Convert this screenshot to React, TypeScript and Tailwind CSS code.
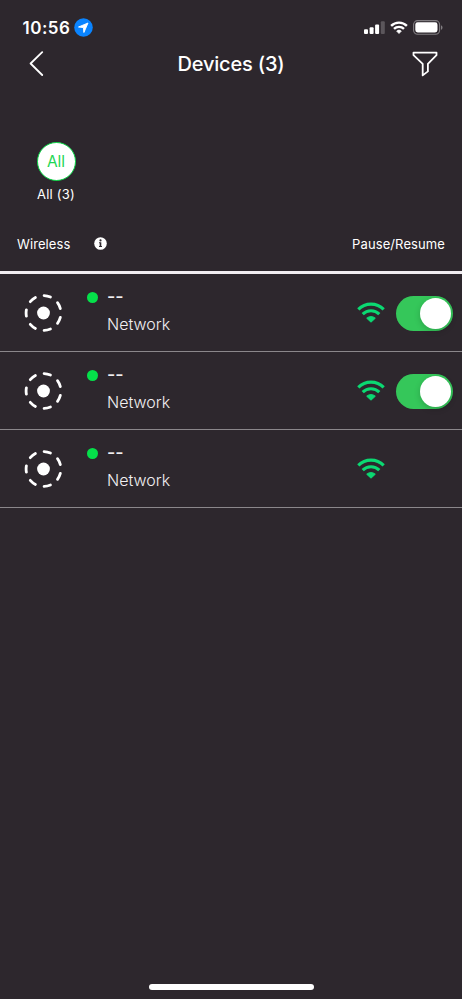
import { useState } from "react";
import clsx from "clsx";

const initialDevices = [
  { id: 1, name: "--", connection: "Network", canPause: true, online: true },
  { id: 2, name: "--", connection: "Network", canPause: true, online: true },
  { id: 3, name: "--", connection: "Network", canPause: false, online: true },
];

function StatusBar() {
  return (
    <div className="flex h-[46px] items-center justify-between pl-[22.5px] pr-[19px] pt-[9px]">
      <div className="flex items-center gap-[4px]">
        <span className="pt-px text-[17px] font-semibold leading-none tracking-[0.5px]">10:56</span>
        <svg className="h-[19px] w-[19px]" viewBox="0 0 19 19">
          <circle cx="9.5" cy="9.5" r="9.3" fill="#0a84ff" />
          <path d="M14 5 4.5 9l4.9.6.5 4.9Z" fill="#fff" stroke="#fff" strokeWidth="0.9" strokeLinejoin="round" />
        </svg>
      </div>
      <div className="flex items-center">
        <svg className="h-[13px] w-[21px]" viewBox="0 0 21 13" fill="#fff">
          <rect x="0" y="8.3" width="4" height="4.7" rx="1" />
          <rect x="5.6" y="6.3" width="4" height="6.7" rx="1" />
          <rect x="11.1" y="3.4" width="4" height="9.6" rx="1" />
          <rect x="16.8" y="0.2" width="4" height="12.8" rx="1" opacity="0.22" />
        </svg>
        <svg className="ml-[5px] h-[13px] w-[18px]" viewBox="0 0 18 13" fill="none" stroke="#fff" strokeWidth="2.4">
          <path d="M1.1 4.8a11.3 11.3 0 0 1 15.8 0" />
          <path d="M4 7.9a7.1 7.1 0 0 1 10 0" />
          <path d="m9 12.5 2.3-2.4a3.4 3.4 0 0 0-4.6 0Z" fill="#fff" stroke="#fff" strokeWidth="0.8" strokeLinejoin="round" />
        </svg>
        <svg className="ml-[5px] h-[15px] w-[30px]" viewBox="0 0 30 15">
          <rect x="0.6" y="0.6" width="26" height="13.6" rx="4" fill="none" stroke="#fff" strokeWidth="1.1" opacity="0.4" />
          <rect x="2.3" y="2.3" width="22.2" height="10.2" rx="2.4" fill="#fff" />
          <path d="M28 5.2v4.6c1-.4 1.5-1.3 1.5-2.3S29 5.6 28 5.2Z" fill="#fff" opacity="0.4" />
        </svg>
      </div>
    </div>
  );
}

function Header() {
  return (
    <header className="grid h-[35px] grid-cols-[80px_1fr_80px] items-center">
      <button aria-label="Back" className="pl-[29px]">
        <svg className="h-[25px] w-[15px]" viewBox="0 0 15 25" fill="none" stroke="#fff" strokeWidth="1.8">
          <path d="M13.2 1.2 1.6 12.5l11.6 11.5" strokeLinecap="round" strokeLinejoin="round" />
        </svg>
      </button>
      <h1 className="text-center text-[20px] font-medium leading-none tracking-[-0.2px]">Devices (3)</h1>
      <button aria-label="Filter" className="pl-[30px]">
        <svg className="h-[26px] w-[26px]" viewBox="0 0 26 26" fill="none" stroke="#fff" strokeWidth="1.8" strokeLinejoin="round">
          <path d="M1.5 1.6h23v2.6l-8.6 8.6v7.6l-5.2 4V12.8L1.5 4.2Z" />
        </svg>
      </button>
    </header>
  );
}

function WifiIcon() {
  return (
    <svg className="h-[22px] w-7" viewBox="0 0 28 22" fill="none" stroke="#0bd972" strokeWidth="3.1">
      <path d="M1.3 7.4a18 18 0 0 1 25.4 0" />
      <path d="M5.7 12.2a11.8 11.8 0 0 1 16.6 0" />
      <path d="m14 20.2 4.3-4a6.6 6.6 0 0 0-8.6 0Z" fill="#0bd972" strokeWidth="1" strokeLinejoin="round" />
    </svg>
  );
}

function DeviceIcon() {
  return (
    <svg className="h-10 w-10" viewBox="0 0 40 40">
      <circle
        cx="20.5"
        cy="20"
        r="17.4"
        pathLength="70"
        fill="none"
        stroke="#fff"
        strokeWidth="2.8"
        strokeLinecap="round"
        strokeDasharray="4.2 5.8"
        strokeDashoffset="2.1"
        transform="rotate(180 20.5 20)"
      />
      <circle cx="20.5" cy="20" r="6.4" fill="#fff" />
    </svg>
  );
}

function Toggle({ on, onChange }: { on: boolean; onChange: () => void }) {
  return (
    <button
      role="switch"
      aria-checked={on}
      onClick={onChange}
      className={clsx(
        "flex h-[35px] w-[57px] items-center rounded-full px-[2px]",
        on ? "justify-end bg-[#35c75a]" : "justify-start bg-[#5b565d]"
      )}
    >
      <span className="h-[31px] w-[31px] rounded-full bg-white shadow-[0_2px_6px_rgba(0,0,0,0.18)]" />
    </button>
  );
}

export default function App() {
  const [paused, setPaused] = useState<number[]>([]);

  const togglePaused = (id: number) =>
    setPaused((ids) => (ids.includes(id) ? ids.filter((i) => i !== id) : [...ids, id]));

  return (
    <div className="flex h-[999px] w-[462px] flex-col overflow-hidden bg-[#2d272d] font-['Inter',sans-serif] text-white">
      <StatusBar />
      <Header />

      {/* Group filter */}
      <div className="flex h-[139px] pl-[36.5px] pt-[61px]">
        <button className="flex w-[39px] flex-col items-center">
          <span className="flex h-[39px] w-[39px] shrink-0 items-center justify-center rounded-full border-[1.5px] border-[#08d544] bg-white text-[15.5px] text-[#1ed654]">
            All
          </span>
          <span className="mt-[5px] whitespace-nowrap text-[13px] leading-[16px] tracking-[0.2px]">All (3)</span>
        </button>
      </div>

      {/* Column titles */}
      <div className="flex h-[54px] items-center border-b-[3px] border-[#f1edf1] pl-[17px] pr-[17px] pb-px text-[13px] tracking-[0.1px]">
        <span>Wireless</span>
        <svg className="mb-[3px] ml-[24px] h-[13px] w-[13px]" viewBox="0 0 13 13">
          <circle cx="6.5" cy="6.5" r="6.3" fill="#fff" />
          <g fill="#2d272d">
            <circle cx="6.5" cy="3.4" r="1.1" />
            <path d="M5 5.3h2.3v3.6H8v1H5v-1h.7V6.3H5Z" />
          </g>
        </svg>
        <span className="ml-auto">Pause/Resume</span>
      </div>

      <ul>
        {initialDevices.map((device) => (
          <li key={device.id} className="flex h-[78px] border-b border-[#8b878b] pl-[23px] pr-[9px]">
            <div className="flex items-center">
              <DeviceIcon />
            </div>
            <div className="ml-6 flex pt-[18px]">
              <span className={clsx("h-[11px] w-[11px] rounded-full", device.online ? "bg-[#05e04a]" : "bg-gray-500")} />
              <div className="ml-[9px] text-[16px] font-light leading-[26px] text-[#f1eff1]">
                <p className="-mt-[8px] text-[18px] font-medium">{device.name}</p>
                <p className="pt-px">{device.connection}</p>
              </div>
            </div>
            <div className="ml-auto flex items-center gap-[11px] pt-px">
              <WifiIcon />
              {device.canPause ? (
                <Toggle on={!paused.includes(device.id)} onChange={() => togglePaused(device.id)} />
              ) : (
                <span className="w-[57px]" />
              )}
            </div>
          </li>
        ))}
      </ul>

      <div className="mx-auto mb-[9px] mt-auto h-[6px] w-[165px] rounded-full bg-white" />
    </div>
  );
}
